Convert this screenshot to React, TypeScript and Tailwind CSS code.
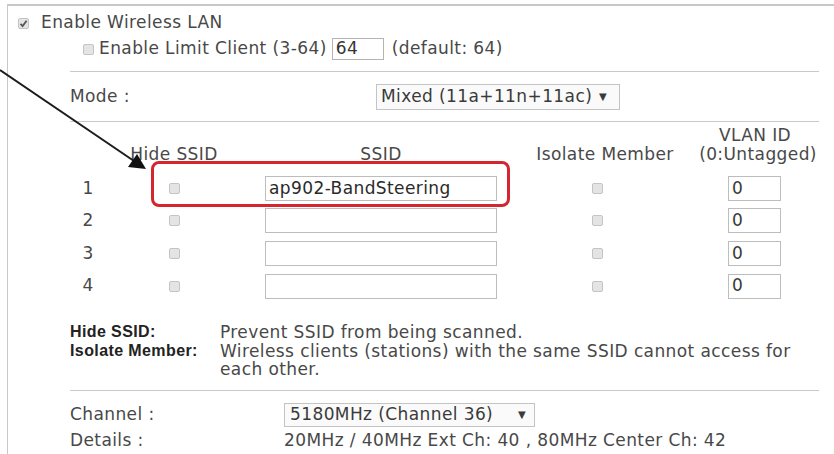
const Box = ({ checked = false }: { checked?: boolean }) => (
  <span className="flex h-[11px] w-[11px] shrink-0 items-center justify-center rounded-[2px] border border-[#c4c4c4] bg-[#e4e4e4]">
    {checked && (
      <svg width="9" height="9" viewBox="0 0 9 9">
        <path d="M1.5 4.8 L3.6 7 L7.6 1.8" fill="none" stroke="#555" strokeWidth="1.8" />
      </svg>
    )}
  </span>
);

const Rule = () => <div className="h-px bg-[#c9c9c9]" />;

const ssids = ['ap902-BandSteering', '', '', ''];

const App = () => {
  return (
    <div className="relative h-[454px] w-[834px] overflow-hidden whitespace-nowrap bg-white font-['DejaVu_Sans',sans-serif] text-[17px] tracking-[0.4px] text-[#484848]">
      <div className="ml-[7px] mt-[4px] h-full border-l border-t-2 border-[#c8c8c8]">
        <div className="flex h-[30px] items-center pl-[10px] pt-[4px]">
          <Box checked />
          <span className="ml-[12px]">Enable Wireless LAN</span>
        </div>

        <div className="pl-[62px] pr-[15px]">
          <div className="flex h-[26px] items-center pl-[13px]">
            <Box />
            <span className="ml-[5px]">Enable Limit Client (3-64)</span>
            <span className="ml-[5px] flex h-[22px] w-[52px] shrink-0 items-center border border-[#b4b4b4] pl-[3px] text-[#333]">64</span>
            <span className="ml-[8px]">(default: 64)</span>
          </div>
          <div className="mt-[9px]">
            <Rule />
          </div>

          <div className="flex h-[49px] items-center">
            <span className="w-[306px] shrink-0">Mode :</span>
            <span className="flex h-[26px] w-[244px] shrink-0 items-center justify-between border border-[#c4c4c4] bg-[#fafafa] pl-[4px] pr-[12px] text-[#3a3a3a]">
              Mixed (11a+11n+11ac)
              <span className="text-[10px]">▼</span>
            </span>
          </div>
          <Rule />

          {/* table header */}
          <div className="flex h-[50px] items-end pb-[9px] leading-[18px]">
            <span className="w-[36px] shrink-0" />
            <span className="w-[136px] shrink-0 text-center">Hide SSID</span>
            <span className="w-[278px] shrink-0 text-center">SSID</span>
            <span className="w-[154px] shrink-0 pl-[16px] text-center">Isolate Member</span>
            <span className="-mb-[1px] flex w-[162px] shrink-0 flex-col items-center leading-[19px]">
              <span className="pl-[-4px]">VLAN ID</span>
              <span className="pl-[6px]">(0:Untagged)</span>
            </span>
          </div>

          {ssids.map((name, i) => (
            <div key={i} className="flex h-[32.6px] items-center">
              <span className="w-[36px] shrink-0 text-center">{i + 1}</span>
              <span className="flex w-[136px] shrink-0 justify-center">
                <Box />
              </span>
              <span className="flex w-[278px] shrink-0 justify-center">
                <span className="flex h-[25px] w-[232px] items-center border border-[#bdbdbd] pl-[3px] text-[#2a2a2a]">{name}</span>
              </span>
              <span className="flex w-[154px] shrink-0 justify-center">
                <Box />
              </span>
              <span className="shrink-0 pl-[54px]">
                <span className="flex h-[25px] w-[53px] items-center border border-[#bdbdbd] pl-[3px] text-[#3a3a3a]">0</span>
              </span>
            </div>
          ))}

          <div className="mt-[21px] flex leading-[18.5px]">
            <div className="w-[150px] shrink-0 font-['Liberation_Sans',sans-serif] text-[16px] font-bold tracking-[0.4px] text-[#222]">
              <div>Hide SSID:</div>
              <div>Isolate Member:</div>
            </div>
            <div className="w-[600px] whitespace-normal">
              <div>Prevent SSID from being scanned.</div>
              <div>Wireless clients (stations) with the same SSID cannot access for each other.</div>
            </div>
          </div>
          <div className="mt-[11px]">
            <Rule />
          </div>

          <div className="flex h-[37px] items-center pt-[11px]">
            <span className="w-[214px] shrink-0">Channel :</span>
            <span className="flex h-[24px] w-[251px] shrink-0 items-center justify-between border border-[#c4c4c4] bg-[#fafafa] pl-[5px] pr-[8px] text-[#3a3a3a]">
              5180MHz (Channel 36)
              <span className="text-[10px]">▼</span>
            </span>
          </div>
          <div className="flex h-[26px] items-center">
            <span className="w-[214px] shrink-0">Details :</span>
            <span>20MHz / 40MHz Ext Ch: 40 , 80MHz Center Ch: 42</span>
          </div>
        </div>
      </div>

      {/* callout: red frame around first SSID row + pointer arrow */}
      <div className="absolute left-[151px] top-[161px] h-[46px] w-[359px] rounded-[8px] border-[3px] border-[#d3262e]" />
      <svg className="absolute left-0 top-0" width="834" height="454">
        <line x1="0" y1="70" x2="134" y2="161" stroke="#1c1c1c" strokeWidth="2" />
        <polygon points="146,169 128,167 137,154" fill="#111" />
      </svg>
    </div>
  );
};

export default App;
